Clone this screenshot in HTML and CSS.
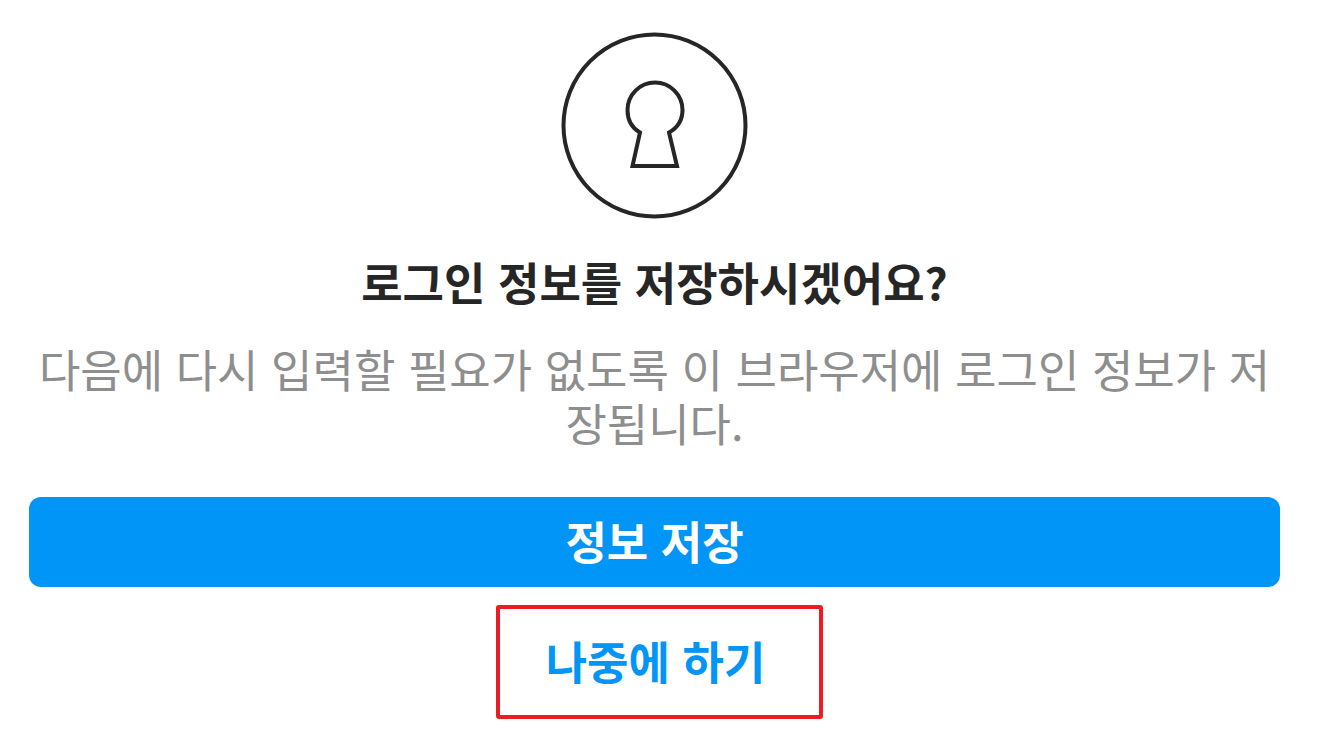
FILE: index.html
```
<!DOCTYPE html>
<html lang="ko">
  <head>
    <meta charset="UTF-8" />
    <meta name="viewport" content="width=device-width, initial-scale=1.0" />
    <title>로그인 정보 저장</title>
    <link rel="stylesheet" href="styles.css">
  </head>
  <body>
    <main class="save-login">
      <svg class="keyhole-icon" viewBox="0 0 188 188" aria-hidden="true">
        <circle cx="93.5" cy="94.5" r="91" />
        <path d="M79 101.5 C71 97 66.500 89 66.500 79 A27.500 27.500 0 0 1 121.500 79 C121.500 89 116 97 108 101.500 L116 135 H71.500 Z" />
      </svg>
      <h1 class="title">로그인 정보를 저장하시겠어요?</h1>
      <p class="description">다음에 다시 입력할 필요가 없도록 이 브라우저에 로그인 정보가 저장됩니다.</p>
      <button class="save-button" type="button">정보 저장</button>
      <div class="highlight">
        <button class="later-button" type="button">나중에 하기</button>
      </div>
    </main>
  </body>
</html>
```
FILE: styles.css
```
* {
  margin: 0;
  padding: 0;
  box-sizing: border-box;
}

body {
  background-color: #fff;
  color: #262626;
  font-family: "Noto Sans CJK KR", sans-serif;
}

.save-login {
  display: flex;
  flex-direction: column;
  align-items: center;
  padding: 31px 42px 0 29px;
}

.keyhole-icon {
  width: 188px;
  height: 188px;
  fill: none;
  stroke: #262626;
  stroke-width: 4;
}

.title {
  margin-top: 33px;
  font-size: 45px;
  font-weight: 600;
  line-height: 60px;
}

.description {
  margin-top: 30px;
  color: #8e8e8e;
  font-size: 45px;
  font-weight: 400;
  line-height: 54px;
  text-align: center;
}

.save-button {
  width: 100%;
  height: 90px;
  margin-top: 47px;
  padding-bottom: 4px;
  border: none;
  border-radius: 12px;
  background-color: #0095f6;
  color: #fff;
  font-family: inherit;
  font-size: 45px;
  font-weight: 600;
  cursor: pointer;
}

.highlight {
  margin: 18px 0 0 10px;
  padding: 20px 54px 22px 46px;
  border: 4px solid #ed1c24;
  border-radius: 3px;
}

.later-button {
  display: block;
  border: none;
  background: none;
  color: #0095f6;
  font-family: inherit;
  font-size: 45px;
  font-weight: 600;
  line-height: 64px;
  cursor: pointer;
}
```
